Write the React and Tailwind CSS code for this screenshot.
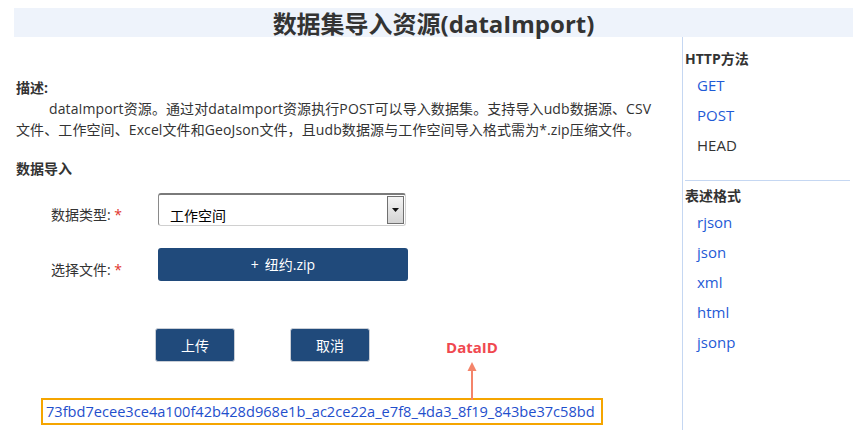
import React from "react";

const font = "font-['Open_Sans','Noto_Sans_CJK_SC',sans-serif]";

const methods = [
  { name: "GET", link: true },
  { name: "POST", link: true },
  { name: "HEAD", link: false },
];

const formats = ["rjson", "json", "xml", "html", "jsonp"];

const navyBtn =
  "bg-[#204a7b] text-white text-[14px] rounded-[3px] border border-[#c9ced6] flex items-center justify-center";

export default function App() {
  return (
    <div className={`w-[853px] h-[430px] bg-white text-[#333] overflow-hidden ${font}`}>
      {/* title band */}
      <div className="mt-[8px] ml-[14px] h-[29px] bg-[#eef3fb] flex items-center justify-center">
        <h1 className="text-[24px] font-bold leading-[29px] text-[#333] pt-[2px]">
          数据集导入资源(dataImport)
        </h1>
      </div>

      <div className="flex h-[393px]">
        {/* main */}
        <div className="w-[668px] ml-[14px] pl-[2px] relative">
          <div className="mt-[41px] text-[14px] font-bold leading-[20px]">描述:</div>
          <p className="text-[14px] leading-[21px] indent-[33px] tracking-[0.1px]">
            dataImport资源。通过对dataImport资源执行POST可以导入数据集。支持导入udb数据源、CSV
            <br />
            文件、工作空间、Excel文件和GeoJson文件，且udb数据源与工作空间导入格式需为*.zip压缩文件。
          </p>
          <div className="mt-[19px] text-[14px] font-bold leading-[20px]">数据导入</div>

          <div className="mt-[14px] flex items-center">
            <span className="w-[142px] pl-[35px] text-[14px] pt-[10px]">
              数据类型: <span className="text-[#e0332b]">*</span>
            </span>
            <div className="w-[248px] h-[33px] rounded-[3px] border border-[#d0d0d0] border-t-2 border-t-[#7a7a7a] border-l-[#8a8a8a] flex items-stretch">
              <span className="flex-1 pl-[11px] pt-[11px] text-[14px] leading-[20px] text-black">
                工作空间
              </span>
              <span className="w-[17px] my-[1px] mr-[1px] border border-[#707070] bg-gradient-to-b from-[#f4f4f4] to-[#d4d4d4] flex items-center justify-center">
                <svg width="7" height="4" viewBox="0 0 7 4">
                  <path d="M0 0h7L3.5 4z" fill="#111" />
                </svg>
              </span>
            </div>
          </div>

          <div className="mt-[22px] flex items-center">
            <span className="w-[142px] pl-[35px] text-[14px] pt-[10px]">
              选择文件: <span className="text-[#e0332b]">*</span>
            </span>
            <button className={`${navyBtn} w-[250px] h-[33px] border-0 gap-[6px]`}>
              <span>+</span>
              <span>纽约.zip</span>
            </button>
          </div>

          <div className="mt-[47px] flex items-center pl-[139px] gap-[55px]">
            <button className={`${navyBtn} w-[80px] h-[34px]`}>上传</button>
            <button className={`${navyBtn} w-[80px] h-[34px]`}>取消</button>
          </div>

          <div className="mt-[36px] ml-[25px] inline-flex h-[27px] items-center border-2 border-[#f5a500] pl-[3px] pr-[6px] text-[14.6px] text-[#1f4fcc]">
            73fbd7ecee3ce4a100f42b428d968e1b_ac2ce22a_e7f8_4da3_8f19_843be37c58bd
          </div>

          {/* DataID annotation */}
          <div className="absolute left-[430px] top-[300px] flex flex-col items-center w-[56px]">
            <span className="text-[15px] font-bold leading-[20px] text-[#f0484f]">DataID</span>
            <svg width="10" height="38" viewBox="0 0 10 38" className="mt-[5px]">
              <path d="M5 3V38" stroke="#f4846a" strokeWidth="2" />
              <path d="M5 0L9.5 9H0.5z" fill="#f4846a" />
            </svg>
          </div>
        </div>

        {/* sidebar */}
        <div className="w-[168px] border-l border-[#c5d7f2] pl-[2px]">
          <div className="pt-[12px] text-[14px] font-bold leading-[20px]">HTTP方法</div>
          <ul className="mt-[1px] pl-[12px] pb-[20px]">
            {methods.map((m) => (
              <li
                key={m.name}
                className={`h-[30px] leading-[30px] text-[15px] ${m.link ? "text-[#1f5bd6]" : "text-[#333]"}`}
              >
                {m.name}
              </li>
            ))}
          </ul>
          <div className="border-t border-[#c5d7f2] pt-[5px] text-[14px] font-bold leading-[20px]">
            表述格式
          </div>
          <ul className="mt-[1px] pl-[12px]">
            {formats.map((f) => (
              <li key={f} className="h-[30px] leading-[30px] text-[15px] text-[#1f5bd6]">
                {f}
              </li>
            ))}
          </ul>
        </div>
      </div>
    </div>
  );
}
